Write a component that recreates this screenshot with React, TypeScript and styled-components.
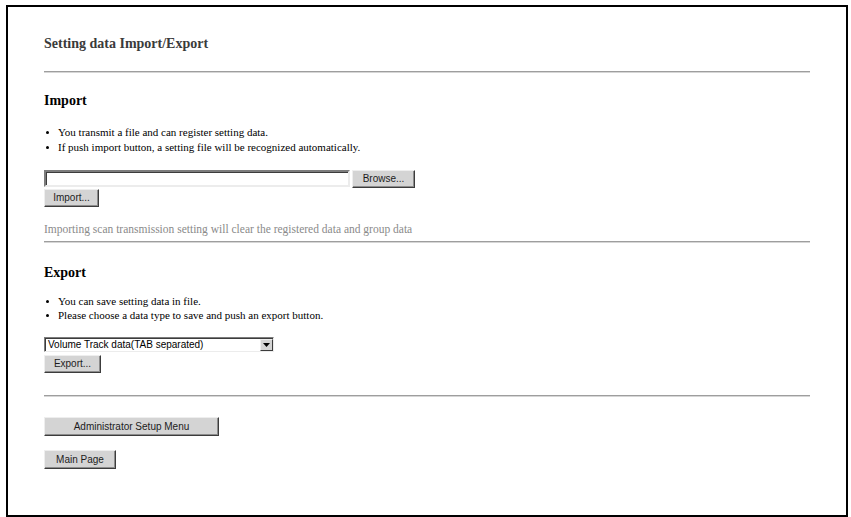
import React from "react";
import styled, { createGlobalStyle } from "styled-components";

const GlobalStyle = createGlobalStyle`
  html, body {
    margin: 0;
    padding: 0;
    background: #fff;
  }
  body {
    font-family: "Liberation Serif", "Times New Roman", serif;
  }
`;

const Frame = styled.div`
  box-sizing: border-box;
  margin: 5px 0 0 6px;
  width: 842px;
  height: 512px;
  border: 2px solid #000;
  padding: 29px 36px 0;
`;

const PageTitle = styled.h1`
  margin: 0;
  font: bold 14px/16px "Liberation Serif", "Times New Roman", serif;
  color: #3a3a3a;
`;

const Rule = styled.hr<{ $top: number }>`
  margin: ${(p) => p.$top}px 0 0;
  height: 0;
  border: 0;
  border-top: 1px solid #9e9e9e;
  border-bottom: 1px solid #d6d6d6;
`;

const SectionHeading = styled.h2<{ $top: number }>`
  margin: ${(p) => p.$top}px 0 0;
  font: bold 14px/16px "Liberation Serif", "Times New Roman", serif;
  color: #000;
`;

const Bullets = styled.ul<{ $top: number; $line: number }>`
  list-style: none;
  margin: ${(p) => p.$top}px 0 0;
  padding: 0;
  font: 11px/${(p) => p.$line}px "Liberation Serif", "Times New Roman", serif;
  color: #000;
`;

const Bullet = styled.li`
  display: flex;
  align-items: center;
  gap: 9px;
  padding-left: 2px;
`;

const Dot = styled.span`
  flex: none;
  width: 3px;
  height: 3px;
  border-radius: 50%;
  background: #000;
`;

const Controls = styled.div<{ $top: number; $gap: number }>`
  margin-top: ${(p) => p.$top}px;
  display: flex;
  flex-direction: column;
  align-items: flex-start;
  gap: ${(p) => p.$gap}px;
`;

const FileRow = styled.div`
  display: flex;
  align-items: flex-start;
  gap: 2px;
`;

const PathField = styled.div`
  box-sizing: border-box;
  width: 306px;
  height: 17px;
  background: #fff;
  border: 2px solid;
  border-color: #7c7c7c #ececec #ececec #7c7c7c;
  box-shadow: inset 1px 1px 0 #3c3c3c;
`;

const Button = styled.button<{ $w: number; $h?: number }>`
  display: block;
  box-sizing: border-box;
  width: ${(p) => p.$w}px;
  height: ${(p) => p.$h ?? 18}px;
  margin: 0;
  padding: 0;
  font: 10px/1 "Liberation Sans", Arial, sans-serif;
  color: #1c1c1c;
  background: #d4d4d4;
  border: 1px solid;
  border-color: #eeeeee #3c3c3c #3c3c3c #eeeeee;
  box-shadow: inset -1px -1px 0 #8c8c8c;
  border-radius: 0;
`;

const Note = styled.p`
  margin: 15px 0 0;
  font: 11.5px/15px "Liberation Serif", "Times New Roman", serif;
  color: #8a8a8a;
`;

const SelectBox = styled.div`
  box-sizing: border-box;
  display: flex;
  align-items: stretch;
  width: 230px;
  height: 15px;
  background: #fff;
  border: 1px solid;
  border-color: #7c7c7c #ececec #ececec #7c7c7c;
  box-shadow: inset 1px 1px 0 #3c3c3c;
`;

const SelectValue = styled.span`
  flex: 1;
  padding: 1px 0 0 3px;
  font: 10px/12px "Liberation Sans", Arial, sans-serif;
  color: #000;
  white-space: nowrap;
`;

const ArrowButton = styled.span`
  box-sizing: border-box;
  flex: none;
  width: 13px;
  margin: 1px 0 0;
  display: flex;
  align-items: center;
  justify-content: center;
  background: #d4d4d4;
  border: 1px solid;
  border-color: #eeeeee #3c3c3c #3c3c3c #eeeeee;
`;

const NavStack = styled.div`
  margin-top: 20px;
  display: flex;
  flex-direction: column;
  align-items: flex-start;
  gap: 14px;
`;

export default function App() {
  return (
    <>
      <GlobalStyle />
      <Frame>
        <PageTitle>Setting data Import/Export</PageTitle>
        <Rule $top={19} />

        <SectionHeading $top={20}>Import</SectionHeading>
        <Bullets $top={16} $line={15}>
          <Bullet>
            <Dot />
            You transmit a file and can register setting data.
          </Bullet>
          <Bullet>
            <Dot />
            If push import button, a setting file will be recognized automatically.
          </Bullet>
        </Bullets>
        <Controls $top={15} $gap={1}>
          <FileRow>
            <PathField />
            <Button type="button" $w={63}>
              Browse...
            </Button>
          </FileRow>
          <Button type="button" $w={55}>
            Import...
          </Button>
        </Controls>
        <Note>
          Importing scan transmission setting will clear the registered data and group data
        </Note>
        <Rule $top={4} />

        <SectionHeading $top={22}>Export</SectionHeading>
        <Bullets $top={13} $line={14}>
          <Bullet>
            <Dot />
            You can save setting data in file.
          </Bullet>
          <Bullet>
            <Dot />
            Please choose a data type to save and push an export button.
          </Bullet>
        </Bullets>
        <Controls $top={15} $gap={3}>
          <SelectBox>
            <SelectValue>Volume Track data(TAB separated)</SelectValue>
            <ArrowButton>
              <svg width="7" height="4" viewBox="0 0 7 4">
                <path d="M0 0h7L3.5 4z" fill="#000" />
              </svg>
            </ArrowButton>
          </SelectBox>
          <Button type="button" $w={57}>
            Export...
          </Button>
        </Controls>
        <Rule $top={22} />

        <NavStack>
          <Button type="button" $w={175} $h={19}>
            Administrator Setup Menu
          </Button>
          <Button type="button" $w={72} $h={19}>
            Main Page
          </Button>
        </NavStack>
      </Frame>
    </>
  );
}
